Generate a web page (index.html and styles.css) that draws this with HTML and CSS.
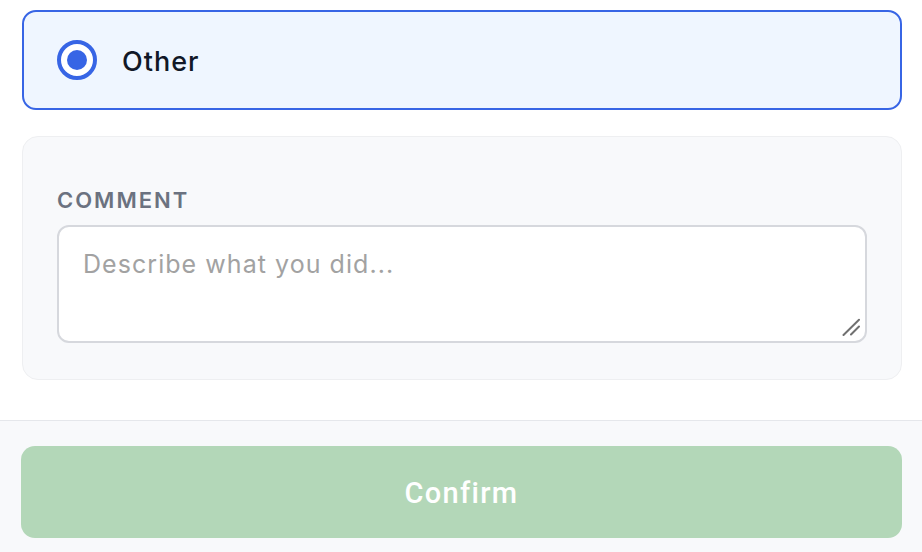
FILE: index.html
```html
<!DOCTYPE html>
<html lang="en">
<head>
<meta charset="utf-8">
<title>Other</title>
<link rel="stylesheet" href="styles.css">
</head>
<body>
<main class="content">
  <label class="option option-selected">
    <span class="radio"><span class="radio-dot"></span></span>
    <span class="option-label">Other</span>
  </label>
  <section class="comment-card">
    <div class="comment-title">COMMENT</div>
    <div class="input-wrap">
      <textarea class="comment-input" placeholder="Describe what you did..."></textarea>
      <svg class="resize-handle" width="18" height="18" viewBox="0 0 18 18" aria-hidden="true">
        <path d="M1.5 17 L17 1.8 M9 16.5 L17 8.5" stroke="#707070" stroke-width="2" stroke-linecap="round" fill="none"/>
      </svg>
    </div>
  </section>
</main>
<footer class="footer">
  <button class="confirm" type="button" disabled>Confirm</button>
</footer>
</body>
</html>
```

FILE: styles.css
```css
* { box-sizing: border-box; }
html, body { margin: 0; padding: 0; background: #ffffff; }
body {
  font-family: Inter, "Noto Sans", sans-serif;
  color: #111827;
}
.content {
  padding: 10px 20px 40px 22px;
  display: flex;
  flex-direction: column;
  gap: 26px;
}
.option {
  display: flex;
  align-items: center;
  height: 100px;
  padding-left: 33px;
  border: 2px solid #3765e5;
  border-radius: 14px;
  background: #eff6ff;
}
.radio {
  width: 40px;
  height: 40px;
  border: 4px solid #3765e5;
  border-radius: 50%;
  display: flex;
  align-items: center;
  justify-content: center;
  background: #ffffff;
  flex: none;
}
.radio-dot {
  width: 20px;
  height: 20px;
  border-radius: 50%;
  background: #3765e5;
}
.option-label {
  margin-left: 25px;
  margin-top: 3px;
  font-size: 27px;
  font-weight: 500;
  letter-spacing: 1px;
  color: #111827;
}
.comment-card {
  height: 244px;
  border: 1px solid #eeeff1;
  border-radius: 16px;
  background: #f8f9fb;
  padding: 50px 34px 35px 34px;
  display: flex;
  flex-direction: column;
  gap: 12px;
}
.comment-title {
  font-size: 22px;
  font-weight: 600;
  letter-spacing: 2px;
  color: #6b7280;
}
.input-wrap {
  position: relative;
}
.comment-input {
  display: block;
  width: 100%;
  height: 118px;
  border: 2px solid #d6d8dd;
  border-radius: 12px;
  background: #ffffff;
  padding: 22px 24px;
  font-family: Inter, "Noto Sans", sans-serif;
  font-size: 25px;
  letter-spacing: 1.05px;
  color: #111827;
  resize: none;
  outline: none;
}
.comment-input::placeholder { color: #a2a2a2; }
.resize-handle {
  position: absolute;
  right: 7px;
  bottom: 7px;
}
.footer {
  border-top: 1px solid #e5e7eb;
  background: #f8f9fb;
  padding: 25px 20px 22px 21px;
}
.confirm {
  display: block;
  width: 100%;
  height: 92px;
  border: none;
  border-radius: 14px;
  background: #b3d7b8;
  color: #ffffff;
  font-family: Roboto, "Liberation Sans", sans-serif;
  font-size: 29px;
  font-weight: 500;
  letter-spacing: 1.3px;
  padding-top: 2px;
}
```
